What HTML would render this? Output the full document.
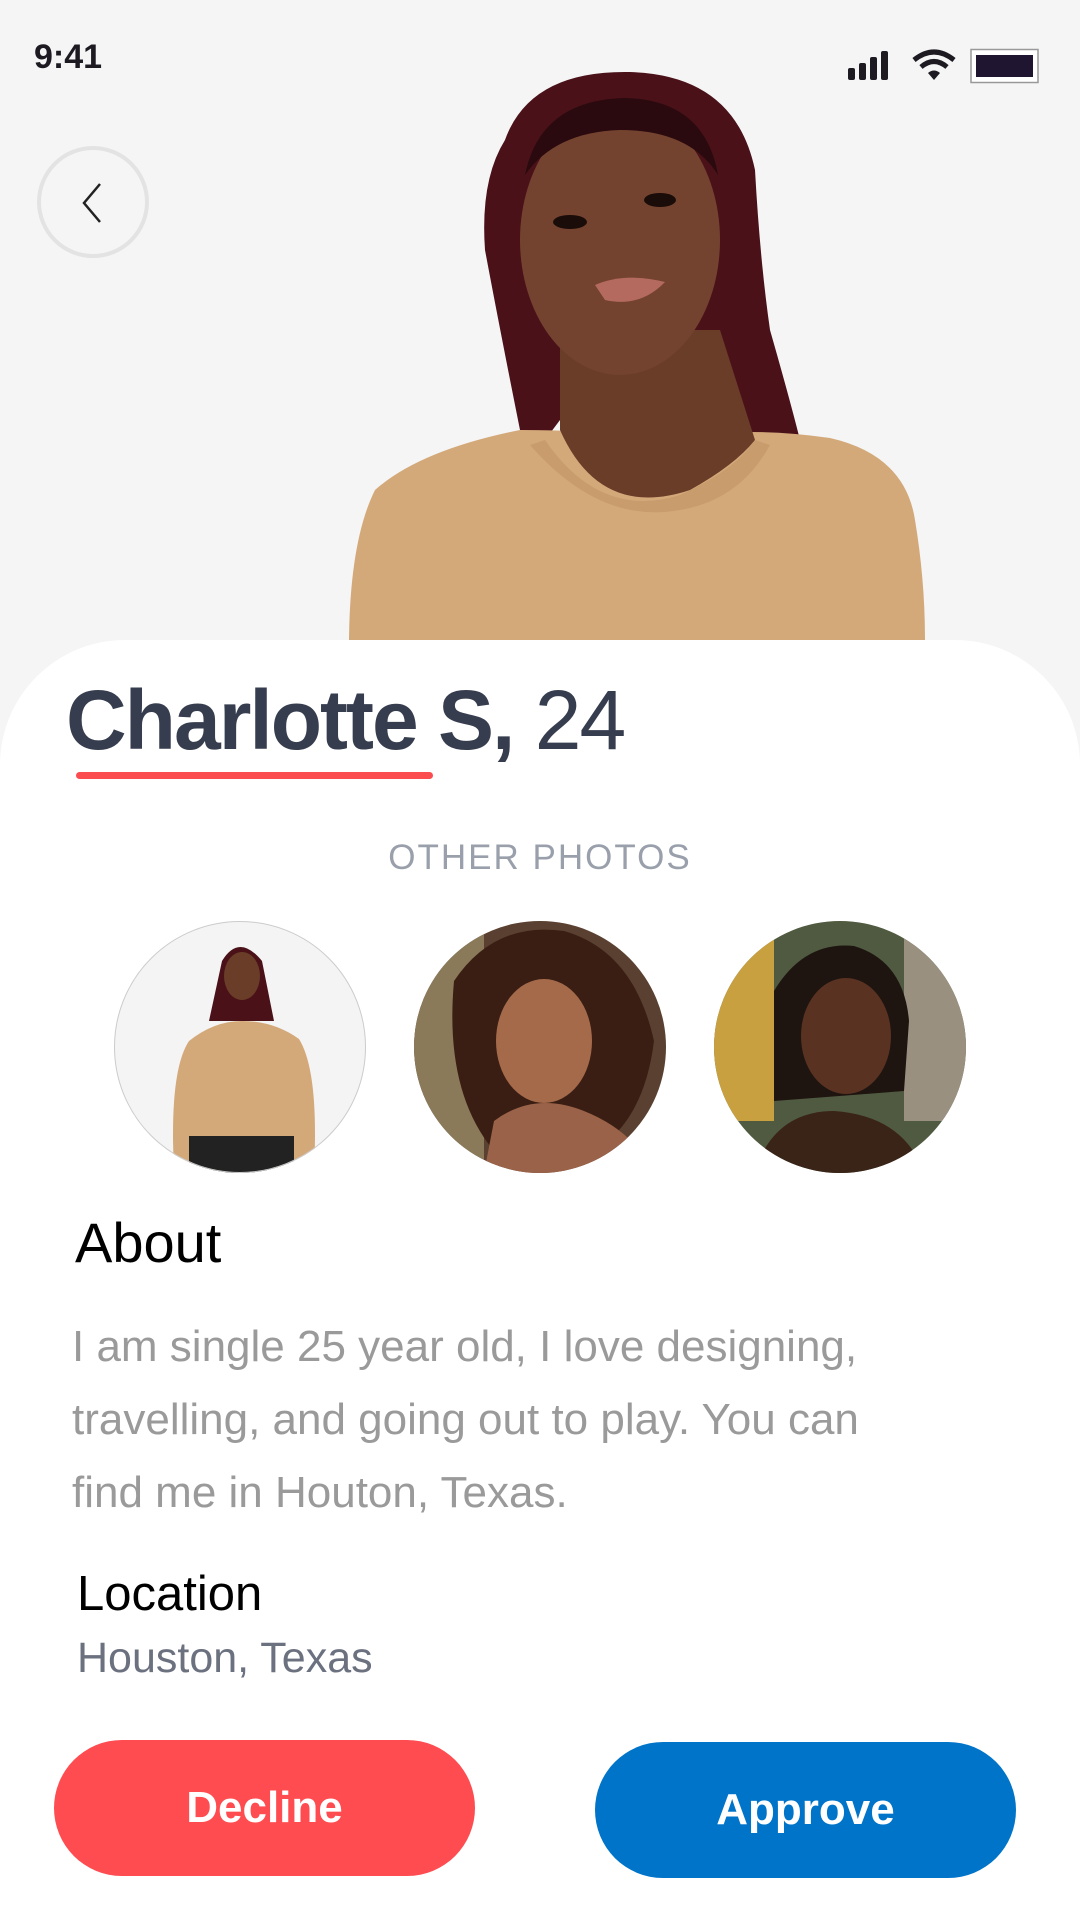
<!DOCTYPE html>
<html><head><meta charset="utf-8"><style>
*{margin:0;padding:0;box-sizing:border-box}
body{width:1080px;height:1920px;overflow:hidden;background:#fff;font-family:"Liberation Sans",sans-serif;position:relative}
.abs{position:absolute}
.hero{left:0;top:0;width:1080px;height:820px;background:#f5f5f5}
.card{left:0;top:640px;width:1080px;height:1280px;background:#fff;border-radius:125px 125px 0 0}
</style></head><body>
<div class="abs hero">
<svg width="1080" height="700" viewBox="0 0 1080 700">
 <path d="M505 140 Q530 70 630 72 Q735 75 755 170 Q760 260 770 330 Q790 400 800 440 L740 450 L700 420 L560 420 L545 440 L520 430 Q500 330 485 250 Q480 180 505 140Z" fill="#4a1119"/>
 <path d="M349 640 Q350 540 375 490 Q420 450 520 430 Q600 430 660 440 Q740 425 830 438 Q905 455 915 520 Q925 580 925 640Z" fill="#d4a97a"/>
 <path d="M560 330 L560 430 Q600 520 690 490 Q735 465 755 440 L720 330Z" fill="#6a3d28"/>
 <path d="M545 440 Q600 520 680 495 Q735 470 755 440 L770 445 Q740 500 680 510 Q600 525 530 445Z" fill="#c99c6e"/>
 <ellipse cx="620" cy="240" rx="100" ry="135" fill="#734330"/>
 <path d="M525 175 Q540 100 625 98 Q705 100 718 175 Q690 130 620 130 Q555 132 525 175Z" fill="#2a0a0e"/>
 <ellipse cx="570" cy="222" rx="17" ry="7" fill="#1a0c08"/>
 <ellipse cx="660" cy="200" rx="16" ry="7" fill="#1a0c08"/>
 <path d="M595 285 Q625 272 665 282 Q640 308 605 300Z" fill="#b56a5f"/>
</svg>
</div>
<div class="abs" style="left:34px;top:38px;font-size:34px;font-weight:bold;color:#1d1a22">9:41</div>
<svg class="abs" style="left:848px;top:48px" width="192" height="36" viewBox="0 0 192 36">
 <rect x="0" y="20" width="7" height="12" rx="2" fill="#1d1a22"/>
 <rect x="11" y="15" width="7" height="17" rx="2" fill="#1d1a22"/>
 <rect x="22" y="9" width="7" height="23" rx="2" fill="#1d1a22"/>
 <rect x="33" y="3" width="7" height="29" rx="2" fill="#1d1a22"/>
 <path d="M66 12 Q86 -4 106 12" stroke="#1d1a22" stroke-width="5" fill="none"/>
 <path d="M73 19 Q86 8 99 19" stroke="#1d1a22" stroke-width="5" fill="none"/>
 <path d="M80 25 L86 32 L92 25 Q86 20 80 25Z" fill="#1d1a22"/>
 <rect x="123" y="1.5" width="67" height="33" fill="#fff" stroke="#999" stroke-width="1.5"/>
 <rect x="128" y="7" width="57" height="22" fill="#1f1530"/>
</svg>
<div class="abs" style="left:37px;top:146px;width:112px;height:112px;border-radius:50%;border:4px solid #e3e3e3"></div>
<svg class="abs" style="left:80px;top:182px" width="24" height="42" viewBox="0 0 24 42"><path d="M20 2 L4 21 L20 40" stroke="#222" stroke-width="2.5" fill="none"/></svg>

<div class="abs card"></div>
<div class="abs" style="left:66px;top:672px;font-size:84px;color:#363d4e;white-space:nowrap;letter-spacing:-2px"><b>Charlotte S,</b> 24</div>
<div class="abs" style="left:76px;top:772px;width:357px;height:7px;border-radius:4px;background:#fb4c50"></div>
<div class="abs" style="left:0;top:838px;width:1080px;text-align:center;font-size:35px;color:#9aa0ab;letter-spacing:2px">OTHER PHOTOS</div>

<svg class="abs" style="left:114px;top:921px" width="852" height="254" viewBox="0 0 852 254">
 <defs>
  <clipPath id="c1"><circle cx="126" cy="126" r="126"/></clipPath>
  <clipPath id="c2"><circle cx="426" cy="126" r="126"/></clipPath>
  <clipPath id="c3"><circle cx="726" cy="126" r="126"/></clipPath>
 </defs>
 <g clip-path="url(#c1)">
  <rect width="252" height="252" fill="#f4f4f4"/>
  <path d="M108 40 Q125 12 148 40 L160 100 L95 100Z" fill="#4a1119"/>
  <ellipse cx="128" cy="55" rx="18" ry="24" fill="#6a3d28"/>
  <path d="M60 250 Q55 150 75 120 Q100 100 128 100 Q160 100 185 118 Q205 150 200 250Z" fill="#d4a97a"/>
  <rect x="75" y="215" width="105" height="40" fill="#222"/>
 </g>
 <circle cx="126" cy="126" r="125.5" fill="none" stroke="#ccc" stroke-width="1"/>
 <g clip-path="url(#c2)">
  <rect x="300" width="252" height="252" fill="#5a4030"/>
  <rect x="300" width="70" height="252" fill="#8a7a5a"/>
  <path d="M340 60 Q380 0 450 10 Q520 30 540 120 Q530 200 480 230 L380 230 Q330 170 340 60Z" fill="#3a1e14"/>
  <ellipse cx="430" cy="120" rx="48" ry="62" fill="#a56a4a"/>
  <path d="M380 200 Q420 170 470 190 Q520 210 540 252 L370 252Z" fill="#9a6248"/>
 </g>
 <g clip-path="url(#c3)">
  <rect x="600" width="252" height="252" fill="#4f5a40"/>
  <rect x="600" width="60" height="200" fill="#c9a040"/>
  <rect x="790" width="62" height="200" fill="#9a9080"/>
  <path d="M660 70 Q690 20 740 25 Q790 40 795 100 L790 170 L660 180Z" fill="#1e1410"/>
  <ellipse cx="732" cy="115" rx="45" ry="58" fill="#5a3222"/>
  <path d="M640 252 Q660 190 720 190 Q790 195 810 252Z" fill="#3a2418"/>
 </g>
</svg>

<div class="abs" style="left:75px;top:1210px;font-size:56px;color:#000">About</div>
<div class="abs" style="left:72px;top:1310px;width:850px;font-size:44px;line-height:73px;color:#9a9a9a">I am single 25 year old, I love designing, travelling, and going out to play. You can find me in Houton, Texas.</div>
<div class="abs" style="left:77px;top:1566px;font-size:49px;color:#000">Location</div>
<div class="abs" style="left:77px;top:1634px;font-size:43px;color:#6c7180">Houston, Texas</div>

<div class="abs" style="left:54px;top:1740px;width:421px;height:136px;border-radius:68px;background:#fe4c50;color:#fff;font-size:44px;font-weight:bold;text-align:center;line-height:136px">Decline</div>
<div class="abs" style="left:595px;top:1742px;width:421px;height:136px;border-radius:68px;background:#0074c9;color:#fff;font-size:44px;font-weight:bold;text-align:center;line-height:136px">Approve</div>
</body></html>
